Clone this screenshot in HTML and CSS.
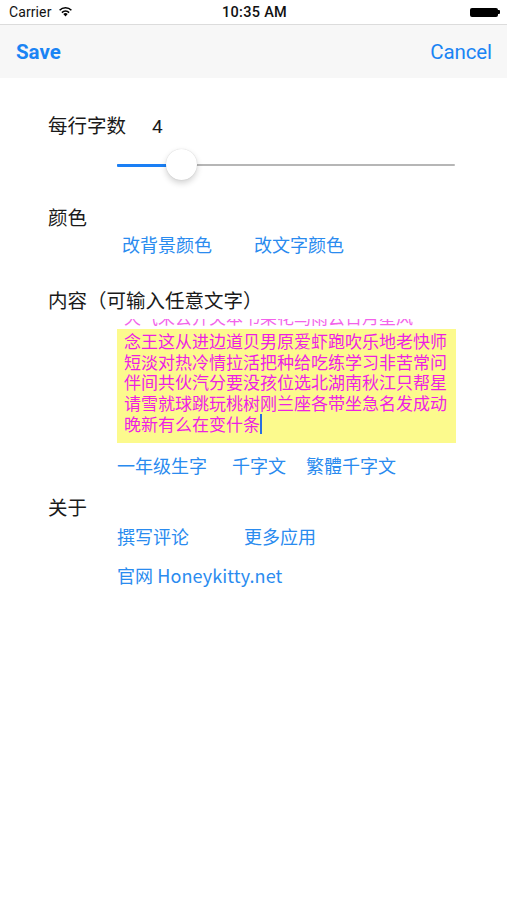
FILE: index.html
```html
<!DOCTYPE html>
<html lang="zh">
<head>
<meta charset="utf-8">
<link rel="stylesheet" href="styles.css">
</head>
<body>
<div class="screen">
  <div class="status">
    <div class="status-left">Carrier
      <svg class="wifi" width="15" height="11" viewBox="0 0 15 11">
        <path d="M7.5 10.5 L5.3 8.1 A3.2 3.2 0 0 1 9.7 8.1 Z" fill="#000"/>
        <path d="M3.9 6.6 A5.2 5.2 0 0 1 11.1 6.6" stroke="#000" stroke-width="1.6" fill="none"/>
        <path d="M1.6 4.2 A8.4 8.4 0 0 1 13.4 4.2" stroke="#000" stroke-width="1.6" fill="none"/>
      </svg>
    </div>
    <div class="status-time">10:35 AM</div>
    <div class="status-right"><span class="battery"></span><span class="nub"></span></div>
  </div>
  <div class="navbar">
    <span class="nav-save">Save</span>
    <span class="nav-cancel">Cancel</span>
  </div>
  <div class="content">
    <div class="label first">每行字数<span class="count">4</span></div>
    <div class="slider">
      <div class="track">
        <div class="fill"></div>
        <div class="thumb"></div>
      </div>
    </div>
    <div class="label gap-color">颜色</div>
    <div class="links tight">
      <span class="link w-bg">改背景颜色</span>
      <span class="link">改文字颜色</span>
    </div>
    <div class="label gap-content">内容（可输入任意文字）</div>
    <div class="textbox">
      <div class="textinner">
        <div class="tline partial"><span>天气来去开关本书果花鸟雨云日月星风</span></div>
        <div class="tline">念王这从进边道贝男原爱虾跑吹乐地老快师</div>
        <div class="tline">短淡对热冷情拉活把种给吃练学习非苦常问</div>
        <div class="tline">伴间共伙汽分要没孩位选北湖南秋江只帮星</div>
        <div class="tline">请雪就球跳玩桃树刚兰座各带坐急名发成动</div>
        <div class="tline">晚新有么在变什条<span class="caret"></span></div>
      </div>
    </div>
    <div class="links presets">
      <span class="link w-grade">一年级生字</span>
      <span class="link w-qzw">千字文</span>
      <span class="link">繁體千字文</span>
    </div>
    <div class="label gap-about">关于</div>
    <div class="links about">
      <span class="link w-review">撰写评论</span>
      <span class="link">更多应用</span>
    </div>
    <div class="links site">
      <span class="link">官网 Honeykitty.net</span>
    </div>
  </div>
</div>
</body>
</html>
```

FILE: styles.css
```css
* { box-sizing: border-box; }
html, body { margin: 0; padding: 0; background: #fff; }
body {
  font-family: "Noto Sans CJK SC", "Noto Sans", sans-serif;
  color: #111;
}
.screen { width: 507px; height: 900px; background: #fff; overflow: hidden; }

.status {
  height: 25px;
  display: flex;
  align-items: center;
  justify-content: space-between;
  padding: 0 7px 0 9px;
  border-bottom: 1px solid #dcdcdc;
  font-family: Roboto, "Liberation Sans", sans-serif;
  font-size: 14px;
}
.status-left { display: flex; align-items: center; gap: 6px; width: 110px; letter-spacing: 0.1px; }
.wifi { margin-top: -1px; }
.status-time {
  font-weight: 500;
  font-size: 14.5px;
  letter-spacing: 0.3px;
}
.status-right { width: 110px; display: flex; justify-content: flex-end; align-items: center; }
.battery { width: 28px; height: 9px; background: #000; border-radius: 2px; }
.nub { width: 2px; height: 4px; background: #000; border-radius: 0 1px 1px 0; }

.navbar {
  height: 53px;
  background: #f7f7f7;
  display: flex;
  align-items: center;
  justify-content: space-between;
  padding: 0 15px 0 16px;
  font-family: Roboto, "Liberation Sans", sans-serif;
  font-size: 20.5px;
  color: #1a84f4;
}
.nav-save { font-weight: 700; letter-spacing: 0; }
.nav-cancel { font-weight: 400; letter-spacing: -0.1px; }

.content { padding-left: 48px; }

.label {
  height: 28px;
  line-height: 28px;
  font-size: 19.5px;
  color: #1a1a1a;
}
.label.first { margin-top: 33px; }
.count { margin-left: 26px; font-family: Roboto, "Liberation Sans", sans-serif; font-size: 19px; }

.slider { margin-top: 10px; height: 32px; margin-left: 69px; width: 338px; display: flex; align-items: center; }
.track { position: relative; width: 100%; height: 2px; background: #b6b6b6; border-radius: 1px; }
.fill { width: 50px; height: 3px; margin-top: -0.5px; background: #1a7ff5; border-radius: 1px; }
.thumb {
  position: absolute;
  left: 49px;
  top: -15px;
  width: 31px;
  height: 31px;
  border-radius: 50%;
  background: #fff;
  box-shadow: 0 3px 6px rgba(0,0,0,0.18), 0 0 1px rgba(0,0,0,0.2);
}

.gap-color { margin-top: 22px; }
.gap-content { margin-top: 30px; }
.gap-about { margin-top: 16px; }

.links {
  height: 24px;
  line-height: 24px;
  font-size: 18px;
  color: #2a8bef;
  display: flex;
  padding-left: 69px;
}
.links.tight { margin-top: 1px; padding-left: 74px; }
.links.presets { margin-top: 10px; }
.links.about { margin-top: 3px; }
.links.site { margin-top: 15px; }
.link { white-space: nowrap; }
.w-bg { width: 132px; }
.w-grade { width: 115px; }
.w-qzw { width: 74px; }
.w-review { width: 127px; }
.site .link { letter-spacing: 0.1px; }

.textbox {
  margin-top: 5px;
  margin-left: 69px;
  width: 339px;
  height: 124px;
  overflow: hidden;
  background: linear-gradient(to bottom, #fff 0, #fff 10px, #fcfa8d 10px, #fcfa8d 100%);
}
.textinner { margin-top: -9px; padding-left: 7px; }
.tline {
  height: 20.8px;
  line-height: 20.8px;
  font-size: 17px;
  color: #ee1fe3;
  white-space: nowrap;
  display: flex;
  align-items: center;
}
.tline.partial { align-items: flex-start; opacity: 0.7; }
.tline.partial span { line-height: 13px; }
.caret { display: inline-block; width: 2px; height: 20px; background: #2a6fe0; }
```
